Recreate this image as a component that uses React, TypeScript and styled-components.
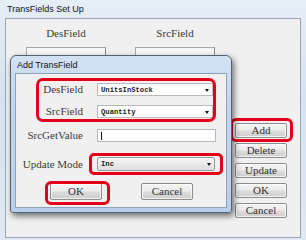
import styled, { createGlobalStyle } from "styled-components";

const GlobalStyle = createGlobalStyle`
  html, body {
    margin: 0;
    padding: 0;
    width: 306px;
    height: 240px;
    overflow: hidden;
    background: #dbe6f2;
  }
  * { box-sizing: border-box; }
`;

const Window = styled.div`
  position: relative;
  width: 306px;
  height: 240px;
  display: flex;
  flex-direction: column;
  padding: 0 5px 2px 5px;
  background: linear-gradient(180deg, #e6eef7 0%, #d6e2f0 40%, #dfe8f3 100%);
`;

const TitleBar = styled.div`
  height: 18px;
  display: flex;
  align-items: center;
  padding-left: 2px;
  font-family: "Liberation Sans", Arial, sans-serif;
  font-size: 9px;
  color: #111;
`;

const Client = styled.div`
  flex: 1;
  display: flex;
  border: 1px solid #9aa6b4;
  background: #f0f0f0;
  padding-left: 20px;
`;

const Columns = styled.div`
  display: grid;
  grid-template-columns: 80px 80px;
  column-gap: 29px;
  align-content: start;
`;

const Column = styled.div`
  display: flex;
  flex-direction: column;
`;

const ColumnHeader = styled.div`
  height: 28px;
  display: flex;
  align-items: center;
  justify-content: center;
  font-family: "Liberation Serif", "Times New Roman", serif;
  font-size: 11px;
  color: #3a3a3a;
`;

const ListBox = styled.div`
  height: 150px;
  background: #f6f6f6;
  border: 1px solid #a7a7a7;
  border-right-color: #8a8a8a;
`;

const ButtonColumn = styled.div`
  display: flex;
  flex-direction: column;
  align-items: flex-start;
  gap: 5px;
  margin-left: 20px;
  padding-top: 104px;
`;

const WinButton = styled.button<{ $w?: number; $h?: number }>`
  width: ${(p) => p.$w ?? 52}px;
  height: ${(p) => p.$h ?? 15}px;
  padding: 0;
  border: 1px solid #8c8c8c;
  border-radius: 2px;
  background: linear-gradient(180deg, #f4f4f4 0%, #ececec 48%, #dcdcdc 52%, #cfcfcf 100%);
  box-shadow: inset 0 0 0 1px rgba(255, 255, 255, 0.7);
  font-family: "Liberation Serif", "Times New Roman", serif;
  font-size: 11px;
  font-weight: normal;
  line-height: 1;
  color: #333;
  display: flex;
  align-items: center;
  justify-content: center;
`;

const Marked = styled.div<{ $inset: string; $radius?: number }>`
  position: relative;
  display: inline-flex;
  justify-self: start;

  &::after {
    content: "";
    position: absolute;
    inset: ${(p) => p.$inset};
    border: 3px solid #e3001b;
    border-radius: ${(p) => p.$radius ?? 6}px;
    pointer-events: none;
  }
`;

const Dialog = styled.div`
  position: absolute;
  left: 10px;
  top: 55px;
  width: 222px;
  height: 158px;
  display: flex;
  flex-direction: column;
  padding: 0 4px 4px 4px;
  border: 1px solid #4f6178;
  border-radius: 6px 6px 3px 3px;
  background: linear-gradient(180deg, #d3e2f3 0%, #c2d6ee 30%, #b9cfe9 100%);
  box-shadow: 2px 3px 6px rgba(0, 0, 0, 0.55);
`;

const DialogTitle = styled.div`
  height: 17px;
  display: flex;
  align-items: center;
  padding-left: 2px;
  font-family: "Liberation Sans", Arial, sans-serif;
  font-size: 9px;
  color: #111;
`;

const DialogClient = styled.div`
  flex: 1;
  border: 1px solid #8da1ba;
  background: #f0f0f0;
  padding-top: 9px;
  display: flex;
  flex-direction: column;
`;

const Group = styled.div`
  position: relative;
  display: flex;
  flex-direction: column;

  &::after {
    content: "";
    position: absolute;
    top: -5px;
    bottom: -4px;
    left: 20px;
    right: 10px;
    border: 3px solid #e3001b;
    border-radius: 7px;
    pointer-events: none;
  }
`;

const Row = styled.div<{ $mt?: number }>`
  display: grid;
  grid-template-columns: 67px auto;
  column-gap: 14px;
  align-items: center;
  margin-top: ${(p) => p.$mt ?? 0}px;
`;

const Label = styled.div`
  text-align: right;
  font-family: "Liberation Serif", "Times New Roman", serif;
  font-size: 11px;
  line-height: 13px;
  color: #3a3a3a;
  white-space: nowrap;
`;

const Combo = styled.div<{ $w: number; $h?: number; $gray?: boolean }>`
  position: relative;
  width: ${(p) => p.$w}px;
  height: ${(p) => p.$h ?? 13}px;
  display: flex;
  align-items: center;
  padding-left: 3px;
  border: 1px solid ${(p) => (p.$gray ? "#9a9a9a" : "#b9b9b9")};
  border-radius: ${(p) => (p.$gray ? 2 : 0)}px;
  background: ${(p) =>
    p.$gray ? "linear-gradient(180deg, #f6f6f6 0%, #e9e9e9 50%, #dedede 100%)" : "#ffffff"};
  font-family: "Liberation Mono", "Courier New", monospace;
  font-size: 7.2px;
  font-weight: bold;
  color: #222;

  &::after {
    content: "";
    position: absolute;
    right: 3px;
    top: 50%;
    margin-top: -1px;
    border-left: 2.5px solid transparent;
    border-right: 2.5px solid transparent;
    border-top: 3px solid #111;
  }
`;

const TextInput = styled.div<{ $w: number }>`
  width: ${(p) => p.$w}px;
  height: 13px;
  display: flex;
  align-items: center;
  padding-left: 3px;
  border: 1px solid #b4b8bf;
  background: #fff;
`;

const Caret = styled.span`
  width: 1px;
  height: 8px;
  background: #111;
`;

const DialogButtons = styled.div`
  display: flex;
  gap: 39px;
  padding-left: 34px;
  margin-top: 12px;
`;

export default function App() {
  return (
    <>
      <GlobalStyle />
      <Window>
        <TitleBar>TransFields Set Up</TitleBar>
        <Client>
          <Columns>
            <Column>
              <ColumnHeader>DesField</ColumnHeader>
              <ListBox />
            </Column>
            <Column>
              <ColumnHeader>SrcField</ColumnHeader>
              <ListBox />
            </Column>
          </Columns>
          <ButtonColumn>
            <Marked $inset="-5px -6px -4px -5px">
              <WinButton>Add</WinButton>
            </Marked>
            <WinButton>Delete</WinButton>
            <WinButton>Update</WinButton>
            <WinButton>OK</WinButton>
            <WinButton>Cancel</WinButton>
          </ButtonColumn>
        </Client>

        <Dialog>
          <DialogTitle>Add TransField</DialogTitle>
          <DialogClient>
            <Group>
              <Row>
                <Label>DesField</Label>
                <Combo $w={116}>UnitsInStock</Combo>
              </Row>
              <Row $mt={9}>
                <Label>SrcField</Label>
                <Combo $w={116}>Quantity</Combo>
              </Row>
            </Group>
            <Row $mt={11}>
              <Label>SrcGetValue</Label>
              <TextInput $w={119}>
                <Caret />
              </TextInput>
            </Row>
            <Row $mt={15}>
              <Label>Update Mode</Label>
              <Marked $inset="-4px -8px -4px -8px" $radius={5}>
                <Combo $w={118} $h={14} $gray>
                  Inc
                </Combo>
              </Marked>
            </Row>
            <DialogButtons>
              <Marked $inset="-2px -8px -5px -5px">
                <WinButton $h={17}>OK</WinButton>
              </Marked>
              <WinButton $h={17}>Cancel</WinButton>
            </DialogButtons>
          </DialogClient>
        </Dialog>
      </Window>
    </>
  );
}
